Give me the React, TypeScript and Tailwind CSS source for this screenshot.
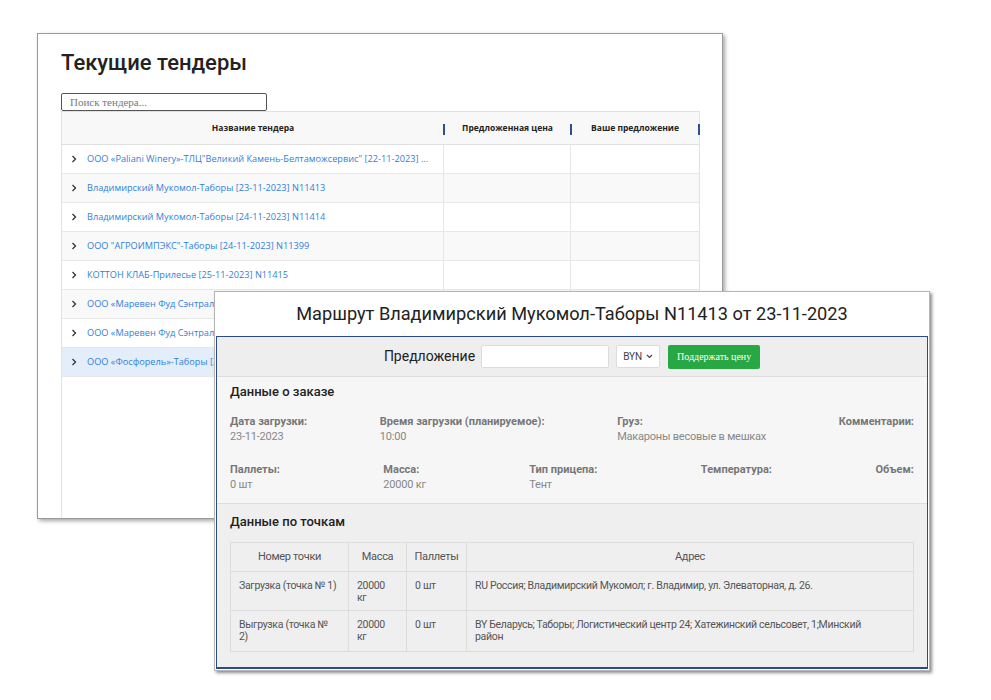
import { FC } from "react";

const tenders = [
  "ООО «Paliani Winery»-ТЛЦ\"Великий Камень-Белтаможсервис\" [22-11-2023] ...",
  "Владимирский Мукомол-Таборы [23-11-2023] N11413",
  "Владимирский Мукомол-Таборы [24-11-2023] N11414",
  "ООО \"АГРОИМПЭКС\"-Таборы [24-11-2023] N11399",
  "КОТТОН КЛАБ-Прилесье [25-11-2023] N11415",
  "ООО «Маревен Фуд Сэнтрал»-Таборы [27-11-2023] N11420",
  "ООО «Маревен Фуд Сэнтрал»-Таборы [28-11-2023] N11421",
  "ООО «Фосфорель»-Таборы [28-11-2023] N11422",
];

const points = [
  {
    name: "Загрузка (точка № 1)",
    address: "RU Россия; Владимирский Мукомол; г. Владимир, ул. Элеваторная, д. 26.",
    h: "h-[39px]",
  },
  {
    name: "Выгрузка (точка № 2)",
    address: "BY Беларусь; Таборы; Логистический центр 24; Хатежинский сельсовет, 1;Минский район",
    h: "h-[41px]",
  },
];

const Chevron: FC = () => (
  <svg width="6" height="8" viewBox="0 0 6 8" className="shrink-0">
    <path d="M1.5 1 L4.5 4 L1.5 7" fill="none" stroke="#333" strokeWidth="1.3" />
  </svg>
);

const HeadCell: FC<{ label: string; className: string }> = ({ label, className }) => (
  <div className={`${className} relative flex items-center justify-center`}>
    <span>{label}</span>
    <span className="absolute right-[-1px] top-[12px] h-[11px] w-[2px] bg-[#2d4f8e]" />
  </div>
);

const TendersWindow: FC = () => (
  <div className="absolute left-[37px] top-[33px] w-[686px] h-[486px] bg-white border border-[#9a9a9a] shadow-[2px_2px_4px_rgba(0,0,0,0.35)] flex flex-col pl-[23px] pr-[22px] pt-[14px] font-['Open_Sans',sans-serif]">
    <h1 className="font-['Roboto',sans-serif] font-medium text-[22px] leading-[30px] text-[#222]">Текущие тендеры</h1>
    <div className="mt-[15px] w-[206px] h-[18px] border border-[#555] rounded-[2px] flex items-center px-[8px] font-['Liberation_Serif',serif] text-[11px] text-[#777]">
      Поиск тендера...
    </div>
    <div className="flex-1 flex flex-col border-x border-[#e2e2e2]">
      <div className="flex h-[34px] bg-[#f8f8f8] border-y border-[#e0e0e0] text-[8.5px] font-bold text-[#222]">
        <HeadCell label="Название тендера" className="w-[382px]" />
        <HeadCell label="Предложенная цена" className="w-[127px]" />
        <HeadCell label="Ваше предложение" className="flex-1" />
      </div>
      {tenders.map((t, i) => (
        <div
          key={i}
          className={`flex h-[29px] border-b border-[#e8e8e8] ${i === 7 ? "bg-[#e3eefa]" : i % 2 === 1 ? "bg-[#f9f9f9]" : "bg-white"}`}
        >
          <div className="w-[382px] flex items-center gap-[10px] pl-[9px] border-r border-[#e6e6e6] text-[9.2px] text-[#2f7fdc] whitespace-nowrap overflow-hidden">
            <Chevron />
            <span>{t}</span>
          </div>
          <div className="w-[127px] border-r border-[#e6e6e6]" />
          <div className="flex-1" />
        </div>
      ))}
    </div>
  </div>
);

const Field: FC<{ label: string; value?: string }> = ({ label, value }) => (
  <div className="flex flex-col">
    <span className="font-bold text-[#777] leading-[15px] tracking-normal">{label}</span>
    <span className="text-[#888] leading-[15px] min-h-[15px]">{value}</span>
  </div>
);

const RouteWindow: FC = () => (
  <div className="absolute left-[214px] top-[291px] w-[716px] h-[380px] bg-white border border-[#b5b5b5] shadow-[2px_2px_3px_rgba(0,0,0,0.45)] flex flex-col px-[1px] pb-[1px] font-['Roboto',sans-serif]">
    <div className="h-[44px] flex items-center justify-center text-[18.2px] text-[#222]">
      Маршрут Владимирский Мукомол-Таборы N11413 от 23-11-2023
    </div>
    <div className="flex-1 flex flex-col border border-b-2 border-[#2b4c8c] bg-[#efefef]">
      <div className="h-[40px] flex items-center justify-center border-b border-[#dedede] bg-[#eeeeee]">
        <span className="text-[14px] text-[#222] mr-[6px]">Предложение</span>
        <div className="w-[128px] h-[23px] bg-white border border-[#dcdcdc] rounded-[2px] mr-[7px]" />
        <div className="w-[44px] h-[23px] bg-white border border-[#dcdcdc] rounded-[2px] mr-[8px] flex items-center justify-between px-[6px] text-[10px] text-[#444]">
          <span>BYN</span>
          <svg width="7" height="5" viewBox="0 0 7 5">
            <path d="M1 1 L3.5 3.5 L6 1" fill="none" stroke="#444" strokeWidth="1.2" />
          </svg>
        </div>
        <div className="w-[92px] h-[24px] bg-[#28a745] rounded-[2px] flex items-center justify-center font-['Liberation_Serif',serif] text-[10px] text-white">
          Поддержать цену
        </div>
      </div>
      <div className="h-[127px] bg-[#f6f6f6] border-b border-[#dedede] px-[13px] pt-[6px] text-[11px] tracking-[-0.02em]">
        <div className="text-[13px] font-medium text-[#222] tracking-normal leading-[18px]">Данные о заказе</div>
        <div className="flex justify-between mt-[13px]">
          <Field label="Дата загрузки:" value="23-11-2023" />
          <Field label="Время загрузки (планируемое):" value="10:00" />
          <Field label="Груз:" value="Макароны весовые в мешках" />
          <Field label="Комментарии:" />
        </div>
        <div className="flex justify-between mt-[18px]">
          <Field label="Паллеты:" value="0 шт" />
          <Field label="Масса:" value="20000 кг" />
          <Field label="Тип прицепа:" value="Тент" />
          <Field label="Температура:" />
          <Field label="Объем:" />
        </div>
      </div>
      <div className="flex-1 px-[13px] pt-[9px]">
        <div className="text-[13px] font-medium text-[#222] leading-[18px]">Данные по точкам</div>
        <table className="mt-[11px] w-full table-fixed border-collapse text-[10.5px] text-[#555] tracking-[-0.03em]">
          <thead>
            <tr className="h-[29px] text-[11px]">
              <th className="w-[118px] border border-[#dcdcdc] font-normal">Номер точки</th>
              <th className="w-[58px] border border-[#dcdcdc] font-normal">Масса</th>
              <th className="w-[60px] border border-[#dcdcdc] font-normal">Паллеты</th>
              <th className="border border-[#dcdcdc] font-normal">Адрес</th>
            </tr>
          </thead>
          <tbody className="leading-[12px]">
            {points.map((p) => (
              <tr key={p.name} className={`${p.h} align-top`}>
                <td className="border border-[#dcdcdc] pl-[8px] pr-[10px] pt-[8px]">{p.name}</td>
                <td className="border border-[#dcdcdc] px-[8px] pt-[8px]">
                  <span className="inline-block w-[34px]">20000 кг</span>
                </td>
                <td className="border border-[#dcdcdc] px-[8px] pt-[8px]">0 шт</td>
                <td className="border border-[#dcdcdc] pl-[8px] pr-[40px] pt-[8px]">{p.address}</td>
              </tr>
            ))}
          </tbody>
        </table>
      </div>
    </div>
  </div>
);

const App: FC = () => {
  return (
    <div className="relative w-[991px] h-[700px] bg-white overflow-hidden">
      <TendersWindow />
      <RouteWindow />
    </div>
  );
};

export default App;
